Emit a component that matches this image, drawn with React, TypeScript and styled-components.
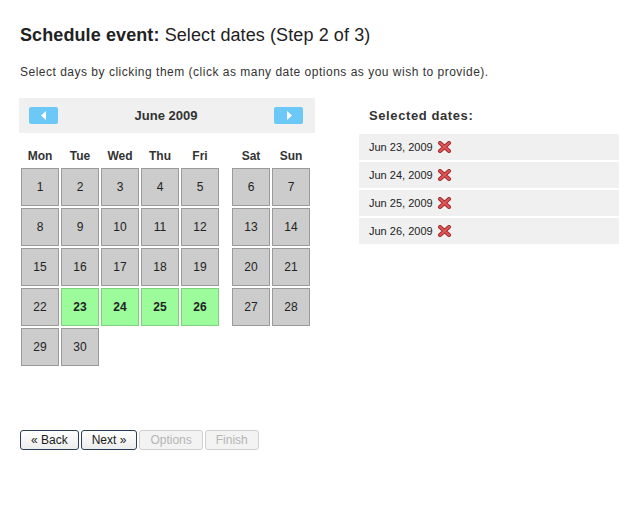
import React from "react";
import styled, { createGlobalStyle } from "styled-components";

const GlobalStyle = createGlobalStyle`
  body {
    margin: 0;
    background: #ffffff;
    font-family: "Liberation Sans", Arial, sans-serif;
    color: #222222;
  }
`;

const Page = styled.div`
  padding: 24px 20px 0 20px;
  width: 643px;
  height: 508px;
  box-sizing: border-box;
`;

const Title = styled.h1`
  margin: 0;
  font-size: 18px;
  font-weight: normal;
  line-height: 22px;
  letter-spacing: 0.1px;
  color: #222222;

  strong {
    font-weight: bold;
  }
`;

const Intro = styled.p`
  margin: 18px 0 0 0;
  font-size: 12px;
  line-height: 16px;
  letter-spacing: 0.5px;
  color: #333333;
`;

const Columns = styled.div`
  display: flex;
  gap: 44px;
  margin-top: 18px;
  margin-left: -1px;
`;

const Calendar = styled.div`
  width: 296px;
`;

const MonthBar = styled.div`
  height: 35px;
  background: #f0f0f0;
  display: flex;
  align-items: center;
  justify-content: space-between;
  padding: 0 12px 0 10px;
  box-sizing: border-box;
`;

const MonthName = styled.span`
  font-size: 13px;
  font-weight: bold;
  color: #333333;
`;

const NavButton = styled.span`
  width: 29px;
  height: 17px;
  border-radius: 2px;
  background: #6cc8f7;
  display: flex;
  align-items: center;
  justify-content: center;
`;

const Grid = styled.div`
  display: grid;
  grid-template-columns: repeat(5, 38px) 9px repeat(2, 38px);
  grid-template-rows: 20px;
  grid-auto-rows: 38px;
  gap: 2px;
  padding-left: 2px;
  margin-top: 13px;
`;

const DayName = styled.div<{ $col: number }>`
  grid-column: ${({ $col }) => $col};
  grid-row: 1;
  text-align: center;
  font-size: 12px;
  font-weight: bold;
  line-height: 20px;
  color: #333333;
`;

const Cell = styled.div<{ $col: number; $selected: boolean }>`
  grid-column: ${({ $col }) => $col};
  box-sizing: border-box;
  border: 1px solid ${({ $selected }) => ($selected ? "#7fcf7f" : "#9a9a9a")};
  background: ${({ $selected }) => ($selected ? "#9cfc9c" : "#cccccc")};
  display: flex;
  align-items: center;
  justify-content: center;
  font-size: 12px;
  font-weight: ${({ $selected }) => ($selected ? "bold" : "normal")};
  color: #222222;
`;

const Selected = styled.div`
  width: 260px;
`;

const SelectedTitle = styled.h2`
  margin: 0;
  height: 35px;
  padding-left: 10px;
  display: flex;
  align-items: center;
  font-size: 13px;
  font-weight: bold;
  letter-spacing: 0.6px;
  color: #333333;
`;

const DateList = styled.div`
  display: flex;
  flex-direction: column;
  gap: 2px;
  margin-top: 1px;
`;

const DateRow = styled.div`
  height: 26px;
  background: #f0f0f0;
  display: flex;
  align-items: center;
  gap: 5px;
  padding-left: 10px;
  font-size: 11px;
  color: #222222;
`;

const Buttons = styled.div`
  display: flex;
  gap: 2px;
  margin-top: 64px;
`;

const Button = styled.button<{ $disabled?: boolean }>`
  height: 20px;
  padding: 0 ${({ $disabled }) => ($disabled ? "10px" : "10px")};
  border-radius: 3px;
  border: 1px solid ${({ $disabled }) => ($disabled ? "#cfcfcf" : "#2a3f55")};
  background: ${({ $disabled }) =>
    $disabled ? "#f3f3f3" : "linear-gradient(#ffffff, #ececec)"};
  color: ${({ $disabled }) => ($disabled ? "#b5b5b5" : "#1a1a1a")};
  font-family: "Liberation Sans", Arial, sans-serif;
  font-size: 12px;
  line-height: 18px;
`;

const Arrow = ({ dir }: { dir: "left" | "right" }) => (
  <svg width="6" height="9" viewBox="0 0 6 9">
    <path d={dir === "left" ? "M5 0 L0 4.5 L5 9 Z" : "M1 0 L6 4.5 L1 9 Z"} fill="#ffffff" />
  </svg>
);

const RemoveIcon = () => (
  <svg width="13" height="12" viewBox="0 0 13 12">
    <path
      d="M2 2 L11 10 M11 2 L2 10"
      stroke="#9c2a2a"
      strokeWidth="4"
      strokeLinecap="round"
    />
    <path
      d="M2 2 L11 10 M11 2 L2 10"
      stroke="#e05555"
      strokeWidth="2.2"
      strokeLinecap="round"
    />
  </svg>
);

const dayNames = ["Mon", "Tue", "Wed", "Thu", "Fri", "Sat", "Sun"];
const picked = [23, 24, 25, 26];

const colFor = (i: number) => (i < 5 ? i + 1 : i + 2);

const App = () => {
  const days = Array.from({ length: 30 }, (_, i) => i + 1);
  return (
    <Page>
      <GlobalStyle />
      <Title>
        <strong>Schedule event:</strong> Select dates (Step 2 of 3)
      </Title>
      <Intro>
        Select days by clicking them (click as many date options as you wish to provide).
      </Intro>
      <Columns>
        <Calendar>
          <MonthBar>
            <NavButton>
              <Arrow dir="left" />
            </NavButton>
            <MonthName>June 2009</MonthName>
            <NavButton>
              <Arrow dir="right" />
            </NavButton>
          </MonthBar>
          <Grid>
            {dayNames.map((d, i) => (
              <DayName key={d} $col={colFor(i)}>
                {d}
              </DayName>
            ))}
            {days.map((d) => (
              <Cell key={d} $col={colFor((d - 1) % 7)} $selected={picked.includes(d)}>
                {d}
              </Cell>
            ))}
          </Grid>
        </Calendar>
        <Selected>
          <SelectedTitle>Selected dates:</SelectedTitle>
          <DateList>
            {picked.map((d) => (
              <DateRow key={d}>
                Jun {d}, 2009
                <RemoveIcon />
              </DateRow>
            ))}
          </DateList>
        </Selected>
      </Columns>
      <Buttons>
        <Button>« Back</Button>
        <Button>Next »</Button>
        <Button $disabled>Options</Button>
        <Button $disabled>Finish</Button>
      </Buttons>
    </Page>
  );
};

export default App;
